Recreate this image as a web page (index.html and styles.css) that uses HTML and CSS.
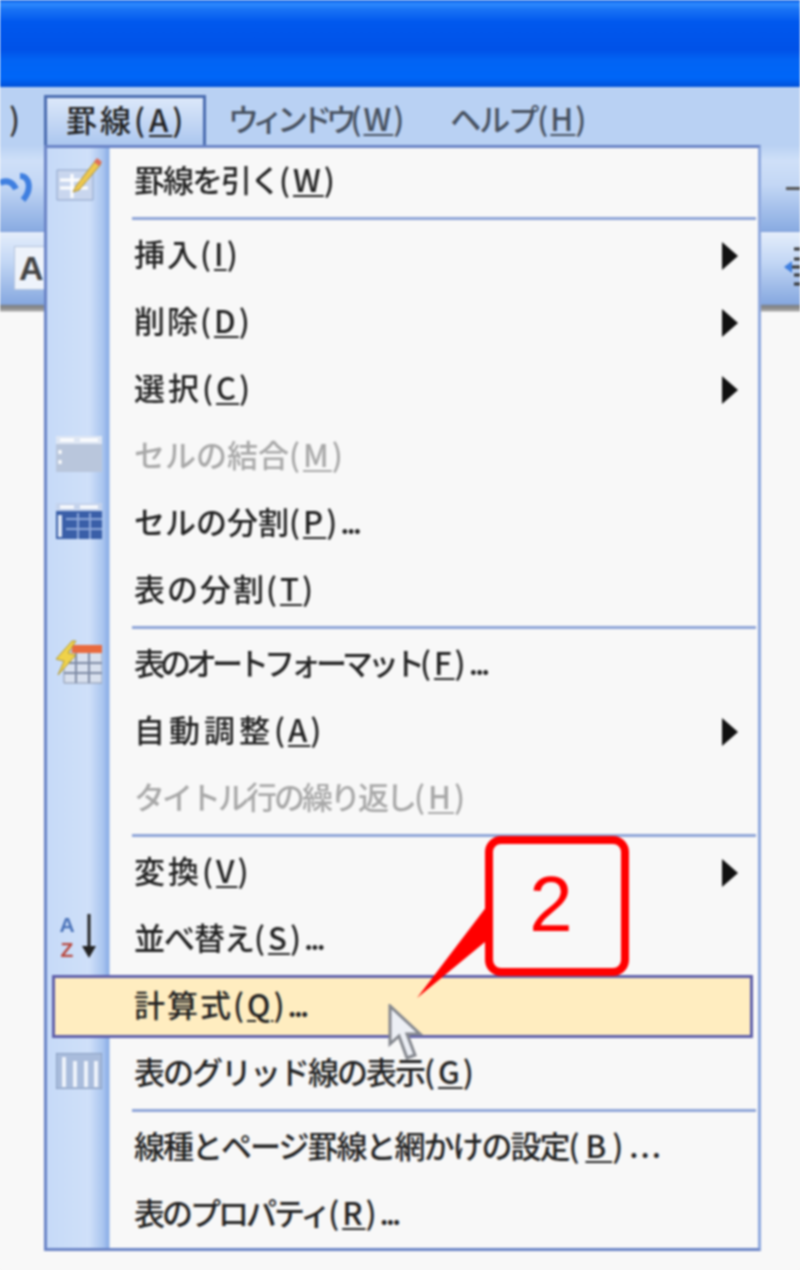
FILE: index.html
```html
<!DOCTYPE html>
<html lang="ja">
<head>
<meta charset="utf-8">
<title>罫線メニュー</title>
<link rel="stylesheet" href="styles.css">
</head>
<body>
<div class="app">
  <header class="titlebar"></header>
  <nav class="menubar">
    <span class="menu-cut">)</span>
    <span class="menu-top active">罫線<span class="k">(<u>A</u>)</span></span>
    <span class="menu-top win">ウィンドウ<span class="k">(<u>W</u>)</span></span>
    <span class="menu-top hlp">ヘルプ<span class="k">(<u>H</u>)</span></span>
  </nav>
  <div class="toolbar tb1">
    <svg class="undo" viewBox="0 0 36 36"><path d="M0 12c8-4 13 0 16 6M20 5c10 0 12 14 3 24" fill="none" stroke="#3f7fe0" stroke-width="6"/></svg>
    <span class="dash"></span>
  </div>
  <div class="toolbar tb2">
    <span class="font-box">A</span>
    <svg class="align" viewBox="0 0 24 40"><path d="M10 2h14M10 12h14M2 20h22M10 28h14M10 37h14" fill="none" stroke="#333" stroke-width="3"/><path d="M0 20l8-6v12z" fill="#3f7fe0"/></svg>
  </div>
  <main class="doc"></main>

  <div class="menu">
    <div class="row"><span class="gut"><svg class="ic" viewBox="0 0 46 46"><path d="M1 14h36v30H1z" fill="#c9d6ee" stroke="#8ea3c8"/><path d="M4 24h28M4 32h28M16 18v24" stroke="#fff" stroke-width="3"/><path d="M20 30L40 4l5 4-22 26-6 2z" fill="#edc84e" stroke="#a98f3a"/><path d="M38 6l3-4 5 4-3 4z" fill="#e0705a"/></svg></span><span class="lbl s29">罫線を引く<span class="k">(<u>W</u>)</span></span></div>
    <hr class="sep">
    <div class="row"><span class="gut"></span><span class="lbl s33">挿入<span class="k">(<u>I</u>)</span></span><i class="arrow"></i></div>
    <div class="row"><span class="gut"></span><span class="lbl s33">削除<span class="k">(<u>D</u>)</span></span><i class="arrow"></i></div>
    <div class="row"><span class="gut"></span><span class="lbl s34">選択<span class="k">(<u>C</u>)</span></span><i class="arrow"></i></div>
    <div class="row off"><span class="gut"><svg class="ic grid" viewBox="0 0 46 36"><path d="M0 0h46v36H0z" fill="#b9c6dc"/><path d="M0 0h46v8H0z" fill="#dfe7f4"/><path d="M4 4h14M24 4h18M4 14v4M4 24v4" stroke="#fff" stroke-width="3"/></svg></span><span class="lbl s31">セルの結合<span class="k">(<u>M</u>)</span></span></div>
    <div class="row"><span class="gut"><svg class="ic grid" viewBox="0 0 46 36"><path d="M0 0h46v36H0z" fill="#3a5fa8"/><path d="M0 0h46v8H0z" fill="#c5d3ec"/><path d="M4 4h14M24 4h18" stroke="#fff" stroke-width="3"/><path d="M10 16h36M10 26h36M22 10v26M34 10v26" stroke="#8ea8da" stroke-width="2"/><path d="M4 12v22" stroke="#dfe7f6" stroke-width="4"/></svg></span><span class="lbl s31">セルの分割<span class="k">(<u>P</u>)</span><span class="d">...</span></span></div>
    <div class="row"><span class="gut"></span><span class="lbl s33">表の分割<span class="k">(<u>T</u>)</span></span></div>
    <hr class="sep">
    <div class="row"><span class="gut"><svg class="ic" viewBox="0 0 46 42"><path d="M8 10h38v32H8z" fill="#d8e0ee" stroke="#8a94a8"/><path d="M16 4h30v8H16z" fill="#e96a3e"/><path d="M8 22h38M8 32h38M20 12v30M33 12v30" stroke="#7d8aa4" stroke-width="2"/><path d="M16 0L0 18l8 2-6 14 18-20-8-2 8-12z" fill="#efd24a" stroke="#b49a30"/></svg></span><span class="lbl s26">表のオートフォーマット<span class="k">(<u>F</u>)</span><span class="d">...</span></span></div>
    <div class="row"><span class="gut"></span><span class="lbl s35">自動調整<span class="k">(<u>A</u>)</span></span><i class="arrow"></i></div>
    <div class="row off"><span class="gut"></span><span class="lbl s28">タイトル行の繰り返し<span class="k">(<u>H</u>)</span></span></div>
    <hr class="sep">
    <div class="row"><span class="gut"></span><span class="lbl s34">変換<span class="k">(<u>V</u>)</span></span><i class="arrow"></i></div>
    <div class="row"><span class="gut"><span class="az"><span class="a">A</span><span class="z">Z</span></span><svg class="down" viewBox="0 0 14 46"><path d="M7 0v34" stroke="#222" stroke-width="3"/><path d="M0 32h14l-7 12z" fill="#222"/></svg></span><span class="lbl s30">並べ替え<span class="k">(<u>S</u>)</span><span class="d">...</span></span></div>
    <div class="row hot"><span class="gut"></span><span class="lbl s33">計算式<span class="k">(<u>Q</u>)</span><span class="d">...</span></span></div>
    <div class="row"><span class="gut"><svg class="ic grid" viewBox="0 0 46 36"><path d="M0 0h46v36H0z" fill="#a9bcdc" stroke="#6f84a8"/><path d="M8 4v30M19 8v26M30 8v26M40 8v26" stroke="#eef3fb" stroke-width="4"/></svg></span><span class="lbl s29">表のグリッド線の表示<span class="k">(<u>G</u>)</span></span></div>
    <hr class="sep">
    <div class="row"><span class="gut"></span><span class="lbl s29">線種とページ罫線と網かけの設定<span class="k wide">(<u>B</u>)</span><span class="d wide">...</span></span></div>
    <div class="row"><span class="gut"></span><span class="lbl s28">表のプロパティ<span class="k">(<u>R</u>)</span><span class="d">...</span></span></div>
  </div>

  <svg class="tail" viewBox="0 0 80 100"><path d="M2 98L72 6l-2 36z" fill="#ff0000"/></svg>
  <div class="callout">2</div>
  <svg class="cursor" viewBox="0 0 36 58"><path d="M2 2v38l9-8 8 22 8-3-8-21h13z" fill="#eceff5" stroke="#85888f" stroke-width="3"/></svg>
</div>
</body>
</html>
```
FILE: styles.css
```css
* { box-sizing: border-box; }
html, body { margin: 0; height: 100%; background: #f8f8f8; }
body { overflow: hidden; }
.app {
  position: relative;
  width: 800px;
  height: 1270px;
  overflow: hidden;
  display: flex;
  flex-direction: column;
  font-family: "Noto Sans CJK JP", "Liberation Sans", sans-serif;
  font-weight: 500;
  color: #222;
  filter: blur(1.1px);
}
u { text-underline-offset: 3px; text-decoration-thickness: 2px; }
.k { letter-spacing: 3px; font-size: 31px; }
.k.wide { letter-spacing: 6px; }
.d { letter-spacing: -3px; }
.d.wide { letter-spacing: 2px; }

.titlebar {
  height: 87px;
  flex: none;
  background: linear-gradient(#0a5ae0 0, #2e8bff 4px, #1a74f5 9px, #0058ee 22px, #0052e8 50px, #0264f4 60px, #0066f8 78px, #0050d8 87px);
}
.menubar {
  height: 58px;
  flex: none;
  background: #b9d1f3;
  display: flex;
  align-items: flex-start;
  padding-top: 8px;
  font-size: 31px;
  line-height: 46px;
}
.menu-cut { width: 44px; text-align: right; padding-right: 24px; color: #333; }
.menu-top { white-space: nowrap; color: #46505f; }
.menu-top .k { letter-spacing: 2px; }
.menu-top.win { margin-left: 22px; letter-spacing: -6.5px; }
.menu-top.hlp { margin-left: 44px; letter-spacing: -2px; }
.menu-top.active {
  width: 162px;
  height: 54px;
  border: 3px solid #4a6cb0;
  border-bottom: 0;
  background: linear-gradient(#dce8fa, #a8c4ee);
  color: #222;
  letter-spacing: 3px;
  padding: 0 19px;
  line-height: 42px;
}
.menu-top.active .k { letter-spacing: 4px; }
.toolbar { position: relative; flex: none; display: flex; align-items: center; justify-content: space-between; }
.tb1 { height: 87px; background: linear-gradient(#b9d1f3 0, #cfe0f8 16px, #c3d7f5 40px, #8aace2 85px, #7f9fd8 87px); }
.tb2 { height: 80px; background: linear-gradient(#e5eefb 0, #c3d7f5 30px, #86a8e0 72px, #7d7d7d 74px, #a8a8a8 79px, #f8f8f8 80px); }
.undo { width: 36px; height: 36px; }
.dash { width: 14px; height: 3px; background: #555; margin-left: auto; }
.font-box { margin: 0 0 8px 14px; width: 40px; height: 44px; background: #eef3fb; border: 1px solid #b4c3dc; font: bold 34px/42px "Liberation Sans", sans-serif; color: #444; padding-left: 4px; }
.align { width: 24px; height: 40px; margin-right: -8px; margin-bottom: 10px; }
.doc { flex: 1; background: #f8f8f8; }

.menu {
  position: absolute;
  left: 44px;
  top: 145px;
  width: 717px;
  height: 1106px;
  border: 3px solid #6a84c6;
  border-right-color: #8ea8de;
  background: linear-gradient(90deg, #c6daf8 0, #cfe0f9 42px, #a9c5ef 56px, #88ace6 62px, #f8f8f8 63px) no-repeat #f8f8f8;
  display: flex;
  flex-direction: column;
  font-size: 31px;
  z-index: 2;
}
.row { height: 67px; flex: none; display: flex; align-items: center; position: relative; }
.gut { width: 63px; flex: none; height: 100%; display: flex; align-items: center; padding: 0 0 5px 9px; gap: 4px; }
.lbl { margin: -6px 0 0 24px; white-space: nowrap; line-height: 1; }
.s26 { letter-spacing: -5px; }
.s28 { letter-spacing: -3px; }
.s29 { letter-spacing: -2px; }
.s30 { letter-spacing: -1px; }
.s31 { letter-spacing: 0; }
.s33 { letter-spacing: 2px; }
.s34 { letter-spacing: 3px; }
.s35 { letter-spacing: 4px; }
.off .lbl { color: #a8a8a8; }
.sep { height: 3px; margin: 2px 2px 2px 85px; border: 0; background: #8fa5d8; flex: none; }
.arrow { position: absolute; right: 20px; top: 20px; border-left: 16px solid #111; border-top: 14px solid transparent; border-bottom: 14px solid transparent; }
.ic { width: 46px; height: 46px; }
.ic.grid { height: 36px; }
.hot { height: 63px; margin: 2px 5px 2px 5px; background: #ffedc0; border: 3px solid #5f60aa; }
.hot .gut { width: 55px; }
.az { display: flex; flex-direction: column; width: 22px; align-items: center; font: bold 21px/25px "Liberation Sans", sans-serif; }
.az .a { color: #4a72b8; }
.az .z { color: #b84a40; }
.down { width: 14px; height: 46px; }

.tail { position: absolute; left: 415px; top: 900px; width: 80px; height: 100px; z-index: 3; }
.callout {
  position: absolute;
  left: 485px;
  top: 836px;
  width: 144px;
  height: 140px;
  border: 8px solid #ff0000;
  border-radius: 16px;
  background: #f8f8f8;
  color: #ff0000;
  font: 78px/120px "Liberation Sans", sans-serif;
  text-align: center;
  padding-right: 12px;
  z-index: 3;
}
.cursor { position: absolute; left: 388px; top: 1004px; width: 36px; height: 58px; z-index: 4; }
```
